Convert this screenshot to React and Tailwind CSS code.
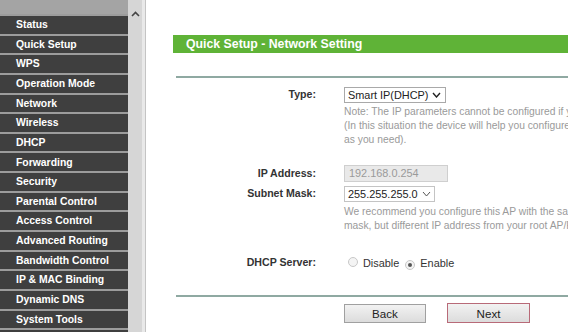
import React from 'react';

const menu = [
  'Status',
  'Quick Setup',
  'WPS',
  'Operation Mode',
  'Network',
  'Wireless',
  'DHCP',
  'Forwarding',
  'Security',
  'Parental Control',
  'Access Control',
  'Advanced Routing',
  'Bandwidth Control',
  'IP & MAC Binding',
  'Dynamic DNS',
  'System Tools',
  'Logout',
];

function Label({ children }) {
  return (
    <div className="w-[142px] shrink-0 text-right pr-[2px] text-[10.6px] font-bold text-[#333]">
      {children}
    </div>
  );
}

function Radio({ checked }) {
  return (
    <span className="inline-flex items-center justify-center w-[10px] h-[10px] rounded-full border border-[#c8c8c8] bg-[#f4f4f4]">
      {checked && <span className="w-[4px] h-[4px] rounded-full bg-[#555]" />}
    </span>
  );
}

export default function App() {
  return (
    <div
      className="flex w-[568px] h-[332px] overflow-hidden bg-white"
      style={{ fontFamily: '"Liberation Sans", Arial, sans-serif' }}
    >
      {/* Menu */}
      <div className="w-[128px] shrink-0 bg-[#a4a4a4] pt-[14px]">
        {menu.map((item) => (
          <div
            key={item}
            className="h-[19.65px] border-t-2 border-[#9c9c9c] bg-[#3f3f3f] pl-[16px] flex items-center text-[10.4px] font-bold text-white whitespace-nowrap"
          >
            {item}
          </div>
        ))}
      </div>

      {/* Scrollbar */}
      <div className="w-[14px] shrink-0 bg-[#d6d6d6] flex justify-center pt-[11px]">
        <svg width="9" height="6" viewBox="0 0 9 6">
          <path d="M1 5 L4.5 1.5 L8 5" fill="none" stroke="#444" strokeWidth="1.6" />
        </svg>
      </div>
      <div className="w-[3px] shrink-0 bg-[#e9e9e9]" />
      <div className="w-[1px] shrink-0 bg-[#c4c4c4]" />

      {/* Content */}
      <div className="flex-1 min-w-0 pl-[27px] pt-[35px] text-[#333]">
        <div className="h-[18px] bg-[#5fb337] pl-[13px] flex items-center text-[12.3px] font-bold text-white whitespace-nowrap">
          Quick Setup - Network Setting
        </div>

        <div className="ml-[3px] mt-[23px] h-[2px] bg-[#8fa9a2]" />

        <div className="ml-[3px]">
          {/* Type */}
          <div className="flex items-center gap-[26px] mt-[9px]">
            <Label>Type:</Label>
            <div className="h-[16px] w-[102px] border border-[#a9a9a9] flex items-center pl-[3px] gap-[4px] text-[10.9px] text-[#222] whitespace-nowrap">
              Smart IP(DHCP)
              <svg width="9" height="6" viewBox="0 0 9 6">
                <path d="M1 1 L4.5 5 L8 1" fill="none" stroke="#222" strokeWidth="1.4" />
              </svg>
            </div>
          </div>
          <div className="ml-[168px] mt-[2px] text-[10.3px] leading-[14px] text-[#9a9a9a] whitespace-nowrap">
            <div>Note: The IP parameters cannot be configured if you use Smart IP(DHCP) mode.</div>
            <div>(In this situation the device will help you configure the IP parameters automatically</div>
            <div>as you need).</div>
          </div>

          {/* IP Address */}
          <div className="flex items-center gap-[26px] mt-[18px]">
            <Label>IP Address:</Label>
            <div className="h-[17px] w-[104px] border border-[#cfcfcf] bg-[#e9e9e9] flex items-center pl-[4px] text-[10.9px] text-[#9a9a9a]">
              192.168.0.254
            </div>
          </div>

          {/* Subnet mask */}
          <div className="flex items-center gap-[26px] mt-[4px]">
            <Label>Subnet Mask:</Label>
            <div className="h-[16px] w-[91px] border border-[#c4c4c4] flex items-center pl-[3px] gap-[4px] text-[10.9px] text-[#222] whitespace-nowrap">
              255.255.255.0
              <svg width="9" height="6" viewBox="0 0 9 6">
                <path d="M1 1 L4.5 5 L8 1" fill="none" stroke="#555" strokeWidth="1" />
              </svg>
            </div>
          </div>
          <div className="ml-[168px] mt-[3px] text-[10.3px] leading-[14px] text-[#9a9a9a] whitespace-nowrap">
            <div>We recommend you configure this AP with the same subnet</div>
            <div>mask, but different IP address from your root AP/Router.</div>
          </div>

          {/* DHCP server */}
          <div className="flex items-center gap-[26px] mt-[22px]">
            <Label>DHCP Server:</Label>
            <div className="flex items-center text-[10.9px] text-[#333]">
              <span className="ml-[4px]"><Radio /></span>
              <span className="ml-[5px]">Disable</span>
              <span className="ml-[6px]"><Radio checked /></span>
              <span className="ml-[5px]">Enable</span>
            </div>
          </div>
        </div>

        <div className="ml-[3px] mt-[24px] h-[2px] bg-[#8fa9a2]" />

        <div className="flex ml-[171px] mt-[7px] gap-[21px]">
          <button className="h-[19px] w-[82px] border border-[#a0a0a0] bg-gradient-to-b from-[#f2f2f2] to-[#dcdcdc] text-[11.6px] text-[#222]">
            Back
          </button>
          <button className="h-[20px] w-[83px] border border-[#b86a78] bg-gradient-to-b from-[#f2f2f2] to-[#dcdcdc] text-[11.6px] text-[#222] -mt-[1px]">
            Next
          </button>
        </div>
      </div>
    </div>
  );
}
